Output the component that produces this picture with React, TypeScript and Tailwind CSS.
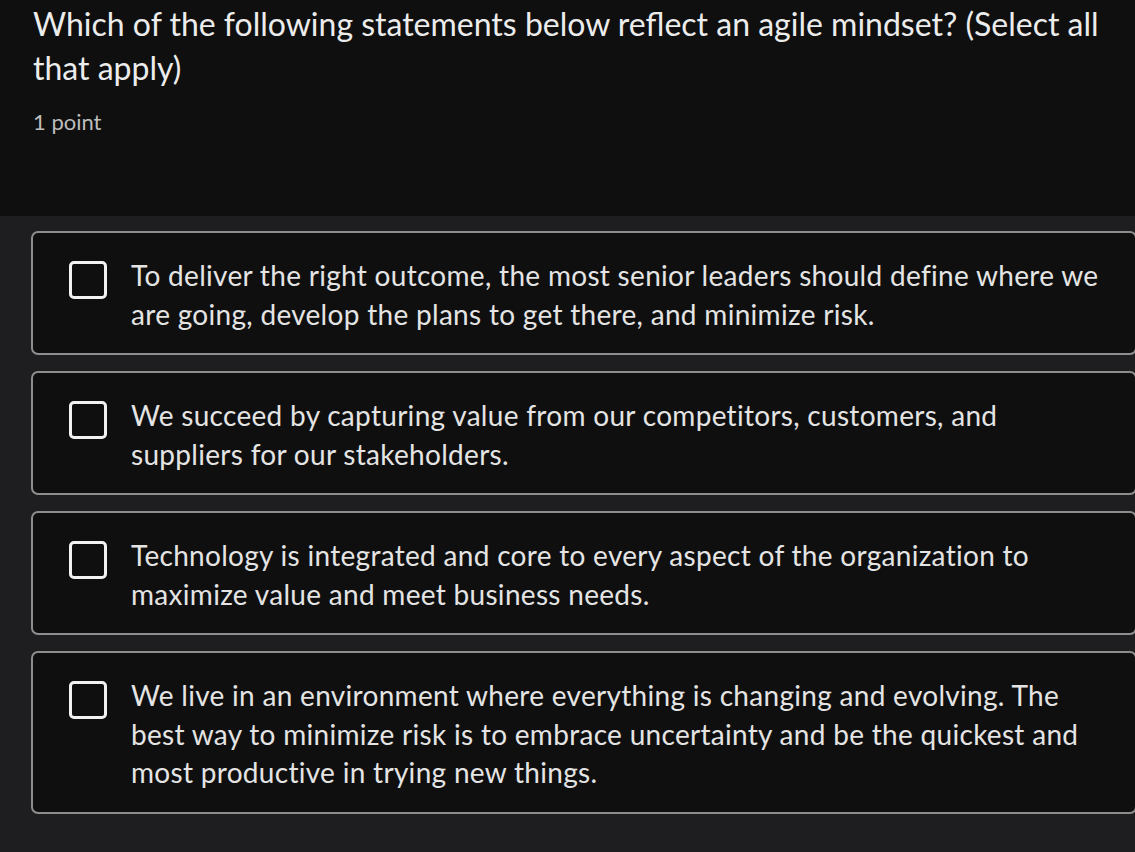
const OPTIONS: string[] = [
  "To deliver the right outcome, the most senior leaders should define where we are going, develop the plans to get there, and minimize risk.",
  "We succeed by capturing value from our competitors, customers, and suppliers for our stakeholders.",
  "Technology is integrated and core to every aspect of the organization to maximize value and meet business needs.",
  "We live in an environment where everything is changing and evolving. The best way to minimize risk is to embrace uncertainty and be the quickest and most productive in trying new things.",
];

function Option({ text }: { text: string }) {
  return (
    <label className="flex w-[1106px] shrink-0 cursor-pointer items-start rounded-[7px] border-2 border-[#8d8d8d] bg-[#0f0f0f] pb-[20px] pl-[36px] pr-[10px] pt-[23px]">
      <span className="mr-[24px] mt-[5px] h-[38px] w-[38px] shrink-0 rounded-[5px] border-[3px] border-[#f2f2f2]" />
      <span className="max-w-[972px] text-[28px] leading-[38.5px] tracking-[0.3px] text-[#e4e4e4]">
        {text}
      </span>
    </label>
  );
}

export default function App() {
  return (
    <div
      className="min-h-screen w-full overflow-hidden bg-[#1e1e20]"
      style={{ fontFamily: "Lato, 'Noto Sans', sans-serif" }}
    >
      <div className="h-[216px] bg-[#0f0f0f] pl-[33px] pt-[2px]">
        <h1 className="w-[1090px] text-[32px] leading-[44px] text-[#ececec]">
          Which of the following statements below reflect an agile mindset? (Select all that apply)
        </h1>
        <p className="mt-[17px] text-[22px] leading-[30px] text-[#bdbdbd]">1 point</p>
      </div>
      <div className="flex flex-col gap-[16px] pl-[31px] pt-[15px]">
        {OPTIONS.map((t) => (
          <Option key={t} text={t} />
        ))}
      </div>
    </div>
  );
}
